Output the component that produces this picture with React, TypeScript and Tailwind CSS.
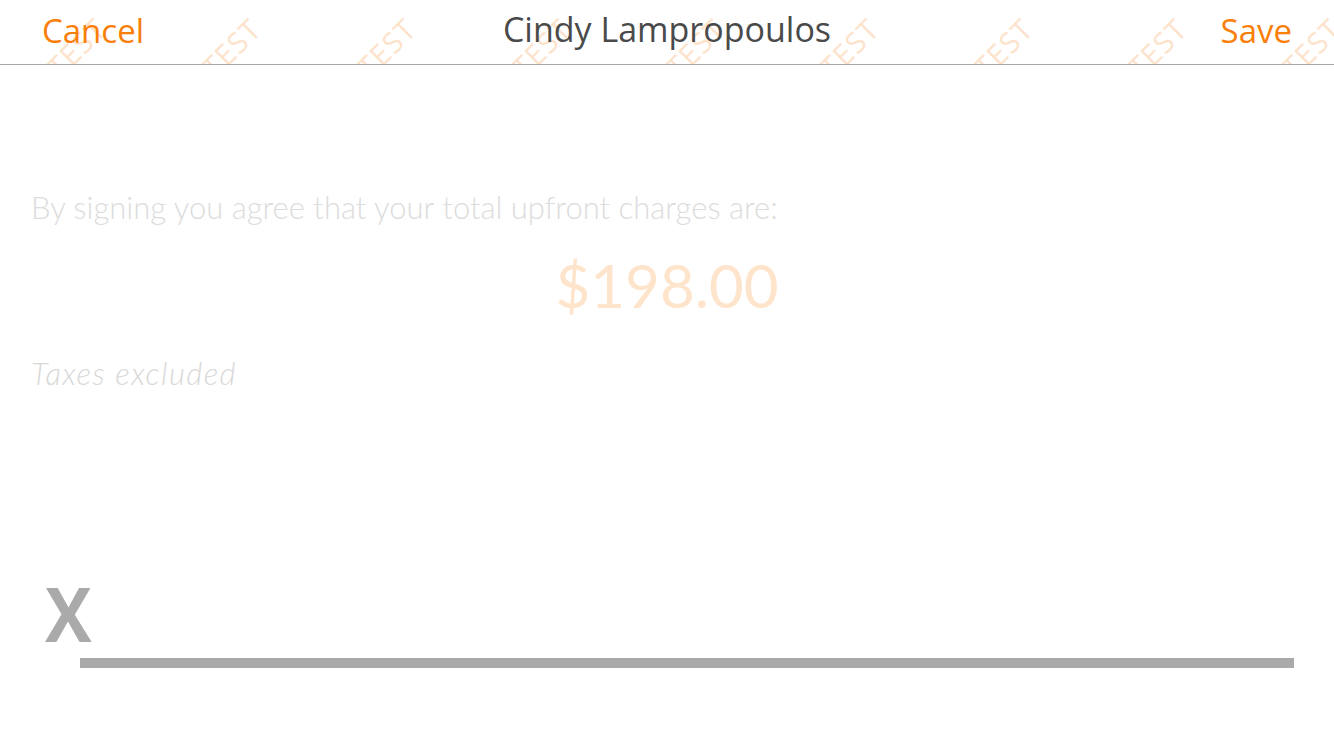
import React from "react";

const marks = [-80, 75, 230, 385, 539, 693, 847, 1001, 1155, 1309];

export default function App() {
  return (
    <div className="relative h-[750px] w-[1334px] overflow-hidden bg-white">
      <header className="relative flex h-[65px] items-center justify-between overflow-hidden border-b border-[#a8a8a8] bg-white px-[42px]" style={{ fontFamily: '"Open Sans", "Noto Sans", sans-serif' }}>
        {marks.map((x) => (
          <span
            key={x}
            className="pointer-events-none absolute top-[33px] -rotate-45 text-[29px] font-normal leading-none tracking-[1px] text-[#fde3cb]"
            style={{ left: x + 122 }}
          >
            TEST
          </span>
        ))}
        <span className="relative -mt-[4px] text-[33px] leading-none text-[#f97f0a]">Cancel</span>
        <span className="absolute left-1/2 top-[12px] -translate-x-1/2 text-[34px] leading-none text-[#4a4a4a]">Cindy Lampropoulos</span>
        <span className="relative -mt-[4px] text-[33px] leading-none text-[#f97f0a]">Save</span>
      </header>
      <main className="flex flex-col px-[31px]" style={{ fontFamily: 'Lato, "Noto Sans", sans-serif' }}>
        <p className="mt-[124px] text-[31px] font-light leading-[36px] text-[#dcdcdc]">By signing you agree that your total upfront charges are:</p>
        <p className="mt-[24px] text-center text-[60px] font-normal leading-[72px] text-[#ffe4cc]">$198.00</p>
        <p className="mt-[34px] text-[31px] font-light italic leading-[36px] tracking-[1.4px] text-[#d8d8d8]">Taxes excluded</p>
      </main>
      <div className="absolute left-[45px] top-[575px] flex w-[1249px] items-end">
        <span className="inline-block origin-left scale-x-[0.92] text-[76px] font-bold leading-none text-[#aaaaaa]" style={{ fontFamily: '"Open Sans", sans-serif' }}>X</span>
      </div>
      <div className="absolute left-[80px] top-[658px] h-[10px] w-[1214px] bg-[#aaaaaa]" />
    </div>
  );
}
